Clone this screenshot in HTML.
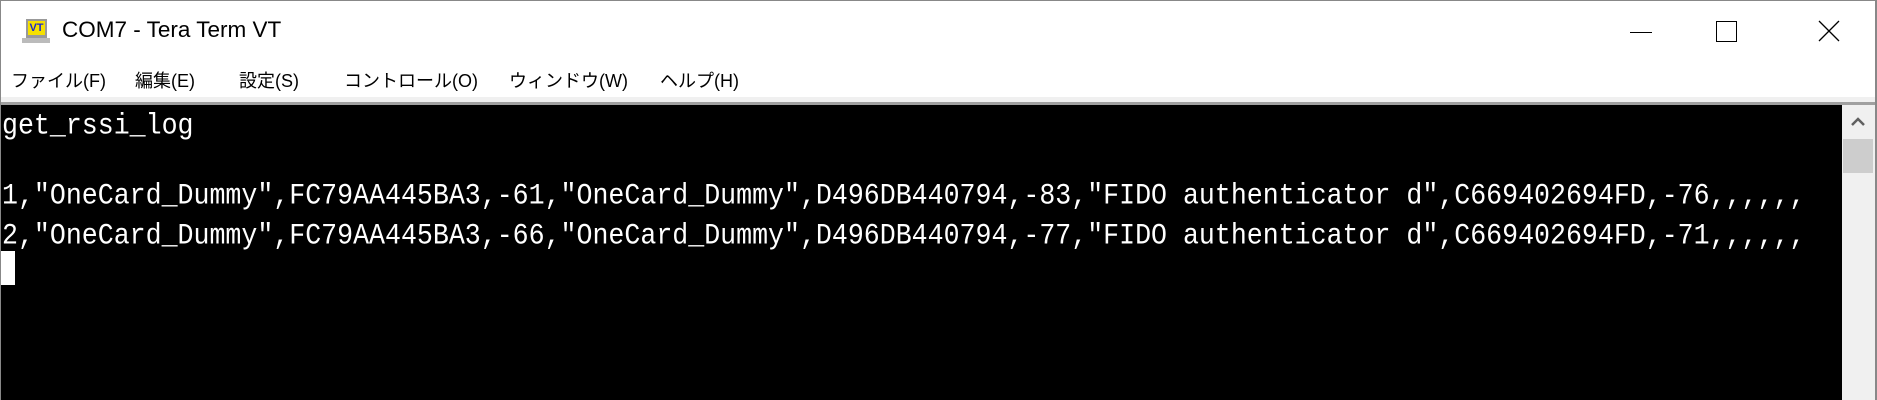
<!DOCTYPE html>
<html><head><meta charset="utf-8"><style>
body{margin:0;width:1877px;height:400px;overflow:hidden;background:#fff;position:relative;font-family:"Liberation Sans","Noto Sans CJK JP",sans-serif}
.a{position:absolute}
.term{position:absolute;left:1px;top:105px;width:1841px;height:295px;background:#000}
.ln{position:absolute;left:1px;font-family:"Liberation Mono","Noto Sans CJK JP",monospace;font-size:26.6px;color:#fff;white-space:pre;line-height:30px;transform:scaleY(1.12);transform-origin:0 0}
.menu span{position:absolute;top:67px;font-size:18px;color:#000;white-space:nowrap}
</style></head><body>
<div class="a" style="left:0;top:0;width:1877px;height:1px;background:#888"></div>
<div class="a" style="left:0;top:0;width:1px;height:400px;background:#888"></div>
<div class="a" style="left:1875px;top:0;width:2px;height:400px;background:#888"></div>
<!-- icon -->
<div class="a" style="left:26px;top:19px;width:21px;height:19px;background:#999"></div>
<div class="a" style="left:28px;top:21px;width:17px;height:14px;background:#f5e000;font:bold 11px 'Liberation Sans';color:#1a2ad0;text-align:center;line-height:14px">VT</div>
<div class="a" style="left:22px;top:38px;width:28px;height:5px;background:#bbb"></div>
<div class="a" style="left:62px;top:17px;font-size:22.5px;color:#000">COM7 - Tera Term VT</div>
<!-- controls -->
<div class="a" style="left:1630px;top:32px;width:22px;height:1px;background:#000"></div>
<div class="a" style="left:1716px;top:21px;width:19px;height:19px;border:1px solid #000"></div>
<svg class="a" style="left:1818px;top:20px" width="22" height="22"><path d="M1 1L21 21M21 1L1 21" stroke="#000" stroke-width="1.3"/></svg>
<div class="menu">
<span style="left:11px">ファイル(F)</span>
<span style="left:135px">編集(E)</span>
<span style="left:239px">設定(S)</span>
<span style="left:344px">コントロール(O)</span>
<span style="left:509px">ウィンドウ(W)</span>
<span style="left:660px">ヘルプ(H)</span>
</div>
<div class="a" style="left:1px;top:97px;width:1874px;height:5px;background:#f0f0f0"></div>
<div class="a" style="left:1px;top:102px;width:1874px;height:3px;background:#a0a0a0"></div>
<div class="term">
<div class="ln" style="top:4px">get_rssi_log</div>
<div class="ln" style="top:74px">1,"OneCard_Dummy",FC79AA445BA3,-61,"OneCard_Dummy",D496DB440794,-83,"FIDO authenticator d",C669402694FD,-76,,,,,,</div>
<div class="ln" style="top:114px">2,"OneCard_Dummy",FC79AA445BA3,-66,"OneCard_Dummy",D496DB440794,-77,"FIDO authenticator d",C669402694FD,-71,,,,,,</div>
<div class="a" style="left:0;top:146px;width:14px;height:34px;background:#fff"></div>
</div>
<div class="a" style="left:1842px;top:105px;width:33px;height:295px;background:#f0f0f0"></div>
<svg class="a" style="left:1851px;top:117px" width="14" height="10"><path d="M1 8L7 2L13 8" stroke="#606060" stroke-width="2.5" fill="none"/></svg>
<div class="a" style="left:1843px;top:139px;width:30px;height:34px;background:#cdcdcd"></div>
</body></html>
